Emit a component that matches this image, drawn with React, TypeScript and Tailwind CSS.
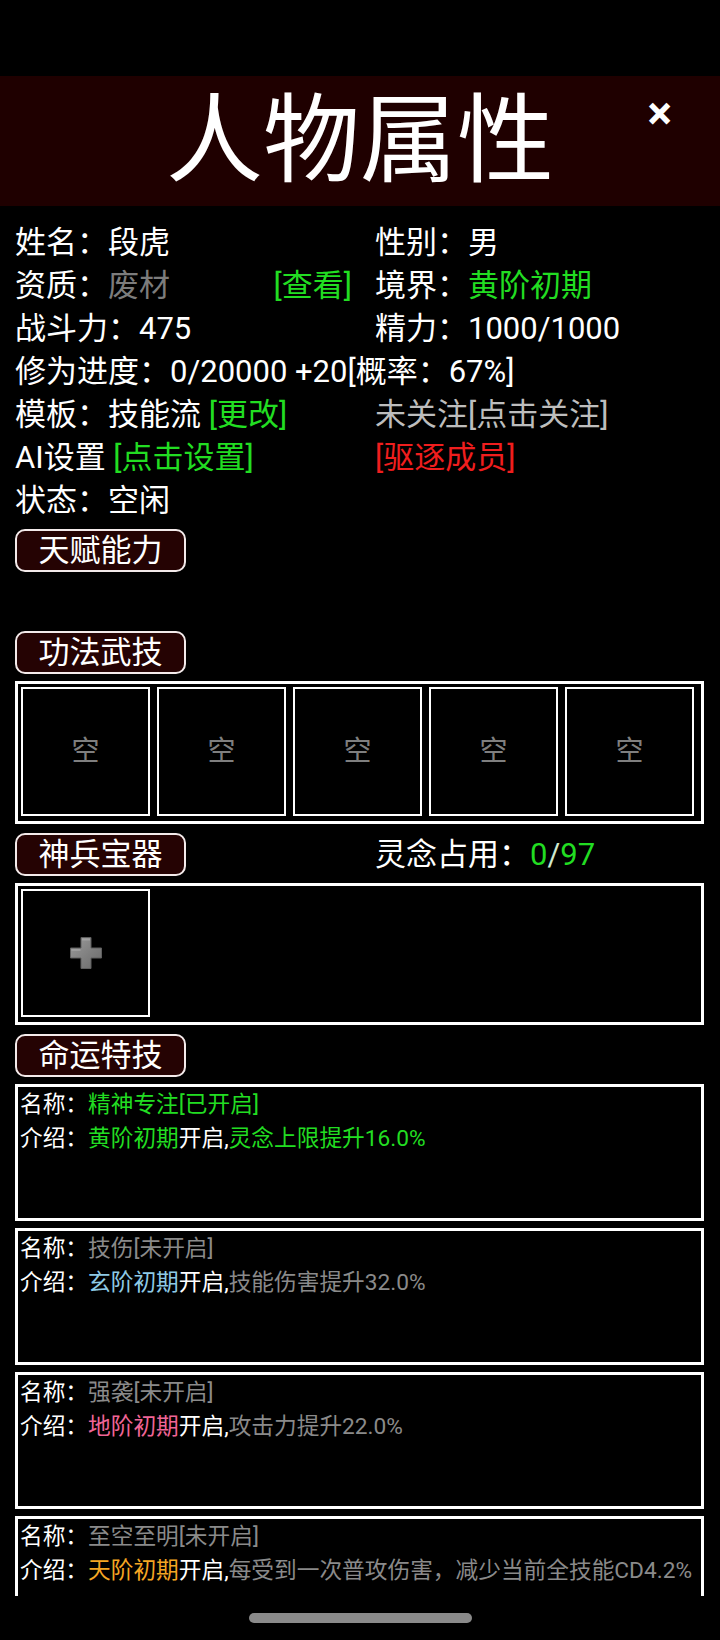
import React from "react";

const G = "text-[#22dd22]";

function SectionButton({ label }: { label: string }) {
  return (
    <div className="w-[171px] h-[43px] rounded-[10px] border-2 border-[#f3eaea] bg-[#250303] flex items-center justify-center text-[31px] leading-none text-white">
      {label}
    </div>
  );
}

function FateCard({
  name,
  nameColor,
  realm,
  realmColor,
  desc,
  descColor,
}: {
  name: string;
  nameColor: string;
  realm: string;
  realmColor: string;
  desc: string;
  descColor: string;
}) {
  return (
    <div className="w-[689px] h-[137px] border-[3px] border-white px-[2px] pt-[1px] text-[22.7px] leading-[34px] whitespace-nowrap overflow-hidden">
      <div>
        <span className="text-white">名称：</span>
        <span className={nameColor}>{name}</span>
      </div>
      <div>
        <span className="text-white">介绍：</span>
        <span className={realmColor}>{realm}</span>
        <span className="text-white">开启,</span>
        <span className={descColor}>{desc}</span>
      </div>
    </div>
  );
}

export default function App() {
  return (
    <div className="w-[720px] h-[1640px] bg-black overflow-hidden flex flex-col text-white font-[Roboto,'Noto_Sans_CJK_SC',sans-serif]">
      <div className="h-[76px] shrink-0" />
      <div className="h-[130px] shrink-0 bg-[#1f0000] relative flex items-center justify-center">
        <div className="text-[97px] leading-none text-white">人物属性</div>
        <div className="absolute right-[48px] top-[14px] text-[46px] font-bold leading-none text-white">×</div>
      </div>

      <div className="h-[1390px] shrink-0 overflow-hidden px-[15px] pt-[15px]">
        <div className="grid grid-cols-[337px_1fr] gap-x-[23px] text-[31px] leading-[43px] whitespace-nowrap">
          <div>姓名：段虎</div>
          <div>性别：男</div>
          <div className="flex justify-between">
            <span>
              资质：<span className="text-[#7c7c7c]">废材</span>
            </span>
            <span className={G}>[查看]</span>
          </div>
          <div>
            境界：<span className={G}>黄阶初期</span>
          </div>
          <div>战斗力：475</div>
          <div>精力：1000/1000</div>
          <div className="col-span-2">修为进度：0/20000 +20[概率：67%]</div>
          <div>
            模板：技能流 <span className={G}>[更改]</span>
          </div>
          <div className="text-[#bdbdbd]">未关注[点击关注]</div>
          <div>
            AI设置 <span className={G}>[点击设置]</span>
          </div>
          <div className="text-[#f01e1e]">[驱逐成员]</div>
          <div>状态：空闲</div>
          <div />
        </div>

        <div className="mt-[7px]">
          <SectionButton label="天赋能力" />
        </div>
        <div className="h-[50px]" />

        <div className="mt-[9px]">
          <SectionButton label="功法武技" />
        </div>
        <div className="mt-[7px] w-[689px] h-[143px] border-[3px] border-white p-[3px] flex items-start gap-[7px]">
          {[0, 1, 2, 3, 4].map((i) => (
            <div
              key={i}
              className="w-[129px] h-[129px] shrink-0 border-2 border-white flex items-center justify-center text-[28px] text-[#7f7f7f]"
            >
              空
            </div>
          ))}
        </div>

        <div className="mt-[9px] grid grid-cols-[360px_1fr] items-center">
          <SectionButton label="神兵宝器" />
          <div className="text-[31px] leading-none whitespace-nowrap">
            灵念占用：<span className={G}>0</span>
            <span className="text-[#cfe9cf]">/</span>
            <span className={G}>97</span>
          </div>
        </div>
        <div className="mt-[7px] w-[689px] h-[142px] border-[3px] border-white p-[3px] flex items-start">
          <div className="w-[129px] h-[128px] border-2 border-white flex items-center justify-center">
            <svg width="34" height="34" viewBox="0 0 34 34">
              <defs>
                <linearGradient id="pg" x1="0" y1="0" x2="1" y2="1">
                  <stop offset="0" stopColor="#9a9a9a" />
                  <stop offset="1" stopColor="#6a6a6a" />
                </linearGradient>
              </defs>
              <path
                d="M12 1.5h10v10.5h10.5v10H22v10.5H12V22H1.5V12H12z"
                fill="url(#pg)"
                stroke="#5e5e5e"
                strokeWidth="1"
                strokeLinejoin="round"
              />
              <path d="M13 2.5h8v2h-8z" fill="#b0b0b0" opacity="0.6" />
              <path d="M2.5 13h9v2h-9z" fill="#b0b0b0" opacity="0.5" />
            </svg>
          </div>
        </div>

        <div className="mt-[9px]">
          <SectionButton label="命运特技" />
        </div>
        <div className="mt-[7px] flex flex-col gap-[7px]">
          <FateCard
            name="精神专注[已开启]"
            nameColor={G}
            realm="黄阶初期"
            realmColor={G}
            desc="灵念上限提升16.0%"
            descColor={G}
          />
          <FateCard
            name="技伤[未开启]"
            nameColor="text-[#8a8a8a]"
            realm="玄阶初期"
            realmColor="text-[#8ecae6]"
            desc="技能伤害提升32.0%"
            descColor="text-[#8a8a8a]"
          />
          <FateCard
            name="强袭[未开启]"
            nameColor="text-[#8a8a8a]"
            realm="地阶初期"
            realmColor="text-[#f06596]"
            desc="攻击力提升22.0%"
            descColor="text-[#8a8a8a]"
          />
          <FateCard
            name="至空至明[未开启]"
            nameColor="text-[#8a8a8a]"
            realm="天阶初期"
            realmColor="text-[#f5a623]"
            desc="每受到一次普攻伤害，减少当前全技能CD4.2%"
            descColor="text-[#8a8a8a]"
          />
        </div>
      </div>

      <div className="flex-1 flex items-start justify-center pt-[17px]">
        <div className="w-[223px] h-[10px] rounded-full bg-[#8a8a8a]" />
      </div>
    </div>
  );
}
